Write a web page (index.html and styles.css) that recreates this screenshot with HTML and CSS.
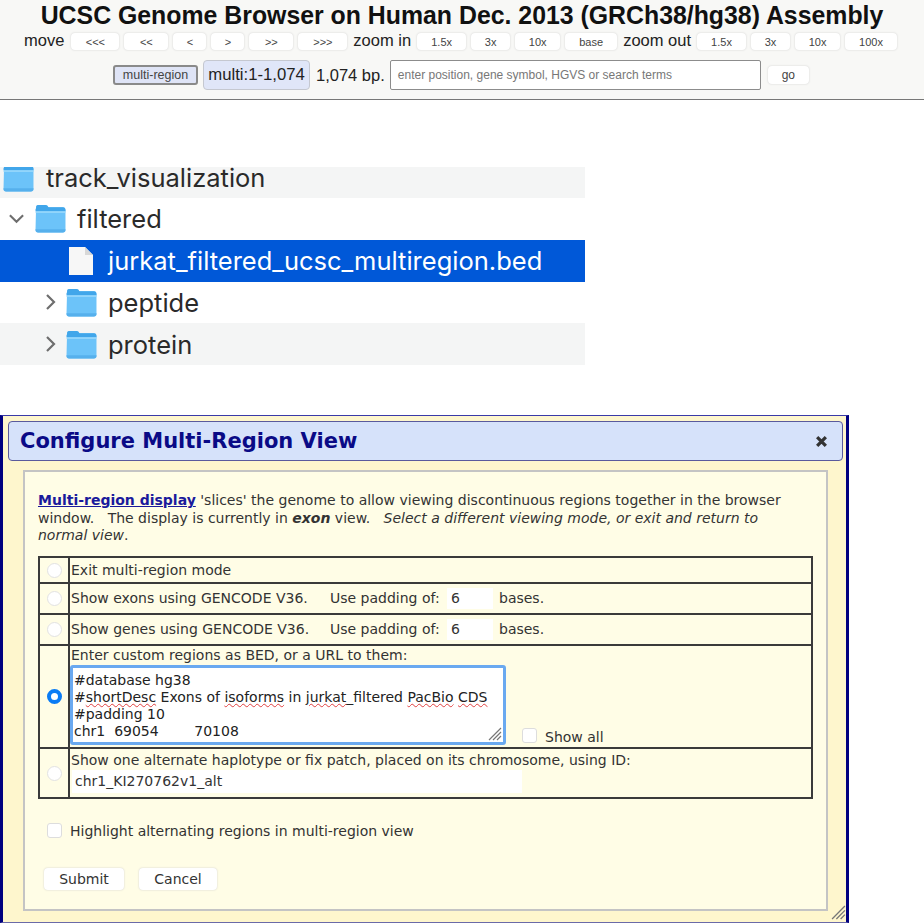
FILE: index.html
```html
<!DOCTYPE html>
<html lang="en">
<head>
  <meta charset="UTF-8">
  <title>Multi-region view</title>
  <link rel="stylesheet" href="styles.css">
</head>
<body>
<svg class="defs" width="0" height="0">
  <defs>
    <symbol id="folder" viewBox="0 0 30 28">
      <path d="M1 4 Q1 1 3 1 H10 Q12 1 13 3 H27 Q29.500 3 29.500 6 V25 Q29.500 27.500 27 27.500 H3 Q.5 27.500 .5 25 Z" fill="#6cc3f9"/>
      <path d="M1 4 Q1 1 3 1 H10 Q12 1 13 3 H27 Q29.500 3 29.500 6 V7 H.5 V5 Z" fill="#41a6ea"/>
      <path d="M.5 7 H29.500 V8.500 H.5 Z" fill="#9bd9fc"/>
      <path d="M.5 25 Q.5 27.500 3 27.500 H27 Q29.500 27.500 29.500 25 V24.500 H.5 Z" fill="#56b0ec"/>
    </symbol>
    <symbol id="grip" viewBox="0 0 14 14">
      <path d="M1 13 L13 1 M5 13 L13 5 M9 13 L13 9" stroke="#777" stroke-width="1.200" fill="none"/>
    </symbol>
  </defs>
</svg>

<header class="topbar">
  <h1>UCSC Genome Browser on Human Dec. 2013 (GRCh38/hg38) Assembly</h1>
  <div class="nav-row">
    <span class="nav-label">move</span>
    <button class="btn w48">&lt;&lt;&lt;</button>
    <button class="btn w44">&lt;&lt;</button>
    <button class="btn w33">&lt;</button>
    <button class="btn w33">&gt;</button>
    <button class="btn w44">&gt;&gt;</button>
    <button class="btn w49">&gt;&gt;&gt;</button>
    <span class="nav-label">zoom in</span>
    <button class="btn w49">1.5x</button>
    <button class="btn w39">3x</button>
    <button class="btn w45">10x</button>
    <button class="btn w52">base</button>
    <span class="nav-label">zoom out</span>
    <button class="btn w49">1.5x</button>
    <button class="btn w39">3x</button>
    <button class="btn w45">10x</button>
    <button class="btn w52">100x</button>
  </div>
  <div class="pos-row">
    <button class="btn-multi">multi-region</button>
    <span class="pos-box">multi:1-1,074</span>
    <span class="pos-size">1,074 bp.</span>
    <div class="search">enter position, gene symbol, HGVS or search terms</div>
    <button class="btn btn-go">go</button>
  </div>
</header>

<section class="tree">
  <div class="tree-row grey top-row">
    <div class="folder-clip"><svg class="folder"><use href="#folder"/></svg></div>
    <span class="name">track_visualization</span>
  </div>
  <div class="tree-row lvl1">
    <svg class="chev-down" viewBox="0 0 18 11"><path d="M2 2 L9 9 L16 2" fill="none" stroke="#6e6e6e" stroke-width="2.200"/></svg>
    <svg class="folder"><use href="#folder"/></svg>
    <span class="name">filtered</span>
  </div>
  <div class="tree-row selected">
    <svg class="file" viewBox="0 0 26 30"><path d="M1 1 H17 L25 9 V29 H1 Z" fill="#f7f7f7"/><path d="M17 1 L25 9 H17 Z" fill="#d8d8d8"/></svg>
    <span class="name">jurkat_filtered_ucsc_multiregion.bed</span>
  </div>
  <div class="tree-row lvl2">
    <svg class="chev-right" viewBox="0 0 11 18"><path d="M2 2 L9 9 L2 16" fill="none" stroke="#6e6e6e" stroke-width="2.200"/></svg>
    <svg class="folder"><use href="#folder"/></svg>
    <span class="name">peptide</span>
  </div>
  <div class="tree-row lvl2 grey">
    <svg class="chev-right" viewBox="0 0 11 18"><path d="M2 2 L9 9 L2 16" fill="none" stroke="#6e6e6e" stroke-width="2.200"/></svg>
    <svg class="folder"><use href="#folder"/></svg>
    <span class="name">protein</span>
  </div>
</section>

<section class="dialog">
  <div class="dialog-title">
    <h2>Configure Multi-Region View</h2>
    <svg class="close" viewBox="0 0 12 12"><path d="M2 2 L10 10 M10 2 L2 10" stroke="#333" stroke-width="3"/></svg>
  </div>
  <div class="dialog-body">
    <p class="intro"><a href="#">Multi-region display</a> 'slices' the genome to allow viewing discontinuous regions together in the browser window. &nbsp; The display is currently in <b><i>exon</i></b> view. &nbsp; <i>Select a different viewing mode, or exit and return to normal view</i>.</p>
    <table class="modes">
      <tr class="r1">
        <td class="pick"><span class="radio"></span></td>
        <td>Exit multi-region mode</td>
      </tr>
      <tr class="r2">
        <td class="pick"><span class="radio"></span></td>
        <td><div class="line"><span class="lead">Show exons using GENCODE V36.</span><span class="pad-label">Use padding of:</span><span class="num">6</span><span>bases.</span></div></td>
      </tr>
      <tr class="r2">
        <td class="pick"><span class="radio"></span></td>
        <td><div class="line"><span class="lead">Show genes using GENCODE V36.</span><span class="pad-label">Use padding of:</span><span class="num">6</span><span>bases.</span></div></td>
      </tr>
      <tr class="r4">
        <td class="pick"><span class="radio on"></span></td>
        <td>
          <div>Enter custom regions as BED, or a URL to them:</div>
          <div class="custom">
            <div class="regions">
              <div>#database hg38</div>
              <div>#<span class="typo">shortDesc</span> Exons of <span class="typo">isoforms</span> in <span class="typo">jurkat</span>_filtered <span class="typo">PacBio</span> <span class="typo">CDS</span></div>
              <div>#padding 10</div>
              <div class="pre">chr1  69054        70108</div>
              <svg class="grip-small"><use href="#grip"/></svg>
            </div>
            <span class="check"></span>
            <span>Show all</span>
          </div>
        </td>
      </tr>
      <tr class="r5">
        <td class="pick"><span class="radio"></span></td>
        <td>
          <div>Show one alternate haplotype or fix patch, placed on its chromosome, using ID:</div>
          <div class="alt-id">chr1_KI270762v1_alt</div>
        </td>
      </tr>
    </table>
    <div class="highlight"><span class="check"></span><span>Highlight alternating regions in multi-region view</span></div>
    <div class="actions">
      <button class="btn-dlg submit">Submit</button>
      <button class="btn-dlg cancel">Cancel</button>
    </div>
  </div>
  <svg class="grip-corner"><use href="#grip"/></svg>
</section>
</body>
</html>
```

FILE: styles.css
```css
* {
  box-sizing: border-box;
}
html, body {
  margin: 0;
  height: 924px;
  overflow: hidden;
  background: #fff;
}
body {
  font-family: "Liberation Sans", Arial, sans-serif;
  color: #222;
}
.defs {
  position: absolute;
}

/* genome browser header */
.topbar {
  height: 100px;
  background: #f8f8f6;
  border-bottom: 1px solid #777;
}
.topbar h1 {
  margin: 0;
  height: 33px;
  padding-top: 2px;
  font-size: 24.850px;
  line-height: 28px;
  text-align: center;
  color: #111;
}
.nav-row {
  display: flex;
  align-items: center;
  gap: 5px;
  height: 17px;
  padding-left: 24px;
}
.nav-label {
  margin: -2px 1px 0;
  font-size: 16.500px;
  line-height: 17px;
  white-space: nowrap;
}
.nav-label:first-child {
  margin-left: 0;
  margin-right: 2px;
}
.btn {
  height: 17px;
  padding: 0;
  border: 0;
  border-radius: 4px;
  background: #fff;
  box-shadow: 0 0 2px #ccc;
  font: 11px "Liberation Sans", Arial, sans-serif;
  color: #444;
}
.w33 { width: 33px; }
.w39 { width: 39px; }
.w44 { width: 44px; }
.w45 { width: 45px; }
.w48 { width: 48px; }
.w49 { width: 49px; }
.w52 { width: 52px; }

.pos-row {
  display: flex;
  align-items: center;
  height: 32px;
  margin-top: 9px;
  padding-left: 113px;
}
.btn-multi {
  width: 85px;
  height: 20px;
  padding: 0;
  border: 2px solid #8a8a8a;
  border-radius: 3px;
  background: #dfe4f6;
  font: 12.500px "Liberation Sans", Arial, sans-serif;
  color: #444;
}
.pos-box {
  width: 107px;
  height: 30px;
  margin-left: 5px;
  border: 1px solid #c5c8d0;
  border-radius: 4px;
  background: #e0e6f8;
  font-size: 16.700px;
  line-height: 28px;
  text-align: center;
  white-space: nowrap;
}
.pos-size {
  margin-left: 6px;
  font-size: 16.500px;
  white-space: nowrap;
}
.search {
  width: 371px;
  height: 30px;
  margin-left: 5px;
  padding-left: 7px;
  border: 1px solid #8c8c8c;
  border-radius: 2px;
  background: #fff;
  font-size: 12px;
  line-height: 28px;
  color: #777;
}
.btn-go {
  width: 41px;
  height: 18px;
  margin-left: 7px;
  font-size: 12px;
}

/* finder listing */
.tree {
  width: 585px;
  margin-top: 67px;
  font-family: Inter, "Liberation Sans", sans-serif;
  font-size: 25.500px;
  color: #2a2a2a;
}
.tree-row {
  display: flex;
  align-items: center;
  height: 41.750px;
}
.grey {
  background: #f4f5f5;
}
.top-row {
  height: 31px;
  padding-left: 3px;
  align-items: flex-start;
}
.top-row .name {
  line-height: 21px;
  margin-left: 12px;
}
.folder-clip {
  width: 31px;
  height: 25px;
  overflow: hidden;
  display: flex;
  align-items: flex-end;
  flex: none;
}
.folder {
  width: 31px;
  height: 29px;
  flex: none;
}
.name {
  margin-left: 11px;
  white-space: nowrap;
}
.lvl1 {
  padding-left: 8px;
}
.chev-down {
  width: 17px;
  height: 11px;
  margin-right: 10px;
}
.lvl2 {
  padding-left: 45px;
}
.chev-right {
  width: 11px;
  height: 18px;
  margin-right: 10px;
}
.selected {
  padding-left: 68px;
  background: #0058d8;
  color: #fff;
}
.file {
  width: 26px;
  height: 30px;
}
.selected .name {
  margin-left: 14px;
}

/* configure dialog */
.dialog {
  position: relative;
  width: 849px;
  height: 508px;
  margin-top: 50px;
  padding: 5px 3px 0 5px;
  border-style: solid;
  border-width: 1px 3px 1px 3px;
  border-color: #3a3aa8 #00007f #6a6aa8 #00007f;
  background: #fef6cd;
  font-family: "DejaVu Sans", Verdana, sans-serif;
  font-size: 14px;
  color: #333;
}
.dialog-title {
  display: flex;
  align-items: center;
  justify-content: space-between;
  height: 40px;
  padding: 0 14px 0 11px;
  border: 1px solid #5a5a9c;
  border-radius: 4px;
  background: #d6e2fa;
}
.dialog-title h2 {
  margin: 0;
  font-size: 21px;
  color: #0a0a86;
}
.close {
  width: 13px;
  height: 13px;
}
.dialog-body {
  width: 805px;
  height: 441px;
  margin: 9px 0 0 15px;
  padding: 20px 13px 0;
  border: 2px solid #c4c4c4;
  background: #fffde6;
}
.intro {
  width: 770px;
  margin: 0;
  line-height: 17.500px;
}
.intro a {
  color: #1a1a9c;
  font-weight: bold;
}
.modes {
  width: 775px;
  margin-top: 11px;
  border-collapse: collapse;
  table-layout: fixed;
}
.modes td {
  padding: 0 0 0 1px;
  border: 2px solid #3a3a3a;
  line-height: 16px;
  vertical-align: top;
}
.modes td.pick {
  width: 30px;
  padding: 0;
  vertical-align: middle;
  text-align: center;
}
.r1 { height: 26px; }
.r1 td { vertical-align: middle; }
.r2 { height: 31px; }
.r4 { height: 103px; }
.r5 { height: 50px; }
.r4 td { padding-top: 1px; }
.r5 td { padding-top: 3px; }
.line {
  display: flex;
  align-items: center;
  height: 29px;
}
.lead {
  width: 259px;
}
.pad-label {
  width: 117px;
}
.num {
  width: 46px;
  height: 21px;
  margin-right: 6px;
  padding-left: 4px;
  background: #fff;
  line-height: 21px;
}
.radio {
  display: inline-block;
  width: 15px;
  height: 15px;
  margin-left: 1px;
  border: 1px solid #e2e2e2;
  border-radius: 50%;
  background: #fff;
  vertical-align: middle;
}
.radio.on {
  border: 4px solid #0a7cf5;
}
.check {
  flex: none;
  width: 15px;
  height: 15px;
  border: 1px solid #ddd;
  border-radius: 3px;
  background: #fff;
}
.custom {
  display: flex;
  align-items: flex-end;
  gap: 8px;
  margin: 2px 0 0 -1px;
}
.custom .check {
  margin: 0 0 2px 8px;
}
.regions {
  position: relative;
  flex: none;
  width: 436px;
  height: 80px;
  padding: 4px 0 0 1px;
  border: 3px solid #6aa9f0;
  border-radius: 3px;
  background: #fff;
  line-height: 17.300px;
  color: #222;
}
.pre {
  white-space: pre;
}
.typo {
  text-decoration: underline wavy #e04040 1px;
}
.grip-small {
  position: absolute;
  right: 1px;
  bottom: 1px;
  width: 14px;
  height: 14px;
}
.alt-id {
  width: 450px;
  height: 23px;
  margin: 2px 0 0 1px;
  padding-left: 3px;
  background: #fff;
  line-height: 23px;
}
.highlight {
  display: flex;
  align-items: center;
  gap: 8px;
  margin: 24px 0 0 9px;
}
.actions {
  display: flex;
  gap: 15px;
  margin: 29px 0 0 6px;
}
.btn-dlg {
  height: 22px;
  padding: 0;
  border: 0;
  border-radius: 4px;
  background: #fff;
  box-shadow: 0 0 2px #ccc;
  font: 14px "DejaVu Sans", Verdana, sans-serif;
  color: #333;
}
.submit { width: 80px; }
.cancel { width: 78px; }
.grip-corner {
  position: absolute;
  right: 0;
  bottom: 2px;
  width: 15px;
  height: 15px;
}
```
